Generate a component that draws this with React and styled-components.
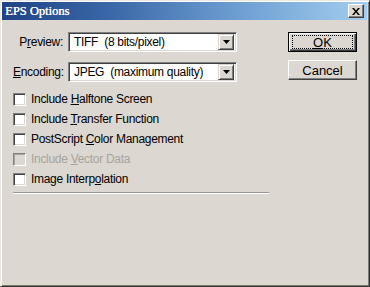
import React from "react"
import styled, { createGlobalStyle } from "styled-components"

const Global = createGlobalStyle`
  html, body {
    margin: 0;
    padding: 0;
    background: #dcd7d0;
  }
`

const FACE = "#dcd7d0"

const Window = styled.div`
  width: 370px;
  height: 287px;
  box-sizing: border-box;
  background: ${FACE};
  border-top: 1px solid #ece9e4;
  border-left: 1px solid #ece9e4;
  border-right: 1px solid #303030;
  border-bottom: 1px solid #303030;
  box-shadow: inset 1px 1px #ffffff, inset -1px -1px #7e7b76;
  padding: 1px 2px 2px 1px;
  display: flex;
  flex-direction: column;
  font-family: "Liberation Sans", Arial, sans-serif;
  font-size: 12px;
  letter-spacing: -0.3px;
  color: #000;
`

const TitleBar = styled.div`
  height: 18px;
  background: linear-gradient(to right, #1f4386 0%, #3a68a8 30%, #6e9fd2 65%, #a3cdf0 100%);
  display: flex;
  align-items: center;
  justify-content: space-between;
  padding: 0 3px 0 3px;
`

const Title = styled.span`
  font-family: "Liberation Serif", "Times New Roman", serif;
  font-size: 12.5px;
  letter-spacing: 0;
  color: #fff;
  text-shadow: 0.4px 0 #fff;
`

const CloseButton = styled.div`
  width: 16px;
  height: 14px;
  box-sizing: border-box;
  background: ${FACE};
  border-top: 1px solid #fff;
  border-left: 1px solid #fff;
  border-right: 1px solid #404040;
  border-bottom: 1px solid #404040;
  box-shadow: inset -1px -1px #808080;
  display: flex;
  align-items: center;
  justify-content: center;
`

const Body = styled.div`
  display: flex;
  padding: 12px 0 0 11px;
`

const Form = styled.div`
  width: 256px;
  display: flex;
  flex-direction: column;
`

const FieldRow = styled.div`
  display: flex;
  align-items: center;
  gap: 5px;
  margin-bottom: ${p => p.$gap || 0}px;
`

const Label = styled.span`
  width: 50px;
  text-align: right;
`

const Select = styled.div`
  width: 169px;
  height: 20px;
  box-sizing: border-box;
  background: #fff;
  border-top: 1px solid #808080;
  border-left: 1px solid #808080;
  border-right: 1px solid #fff;
  border-bottom: 1px solid #fff;
  box-shadow: inset 1px 1px #404040, inset -1px -1px ${FACE};
  display: flex;
  align-items: center;
  padding: 2px 2px 2px 5px;
`

const SelectText = styled.span`
  flex: 1;
  white-space: pre;
`

const ArrowButton = styled.div`
  width: 16px;
  height: 16px;
  box-sizing: border-box;
  background: ${FACE};
  border-top: 1px solid ${FACE};
  border-left: 1px solid ${FACE};
  border-right: 1px solid #404040;
  border-bottom: 1px solid #404040;
  box-shadow: inset 1px 1px #fff, inset -1px -1px #808080;
  display: flex;
  align-items: center;
  justify-content: center;
`

const Checks = styled.div`
  margin-top: 7px;
  display: flex;
  flex-direction: column;
`

const CheckRow = styled.div`
  height: 20px;
  display: flex;
  align-items: center;
  gap: 5px;
  color: ${p => (p.$disabled ? "#a8a49e" : "#000")};
`

const Box = styled.span`
  width: 13px;
  height: 13px;
  box-sizing: border-box;
  background: ${p => (p.$disabled ? FACE : "#fff")};
  border-top: 1px solid #808080;
  border-left: 1px solid #808080;
  border-right: 1px solid #fff;
  border-bottom: 1px solid #fff;
  box-shadow: inset 1px 1px ${p => (p.$disabled ? "#a8a49e" : "#404040")}, inset -1px -1px ${FACE};
`

const Separator = styled.div`
  margin-top: 3px;
  height: 1px;
  background: #999590;
  border-bottom: 1px solid #fff;
`

const Buttons = styled.div`
  margin-left: 19px;
  display: flex;
  flex-direction: column;
  gap: 8px;
`

const Button = styled.div`
  width: 69px;
  height: 20px;
  box-sizing: border-box;
  background: ${FACE};
  border-top: 1px solid #fff;
  border-left: 1px solid #fff;
  border-right: 1px solid #404040;
  border-bottom: 1px solid #404040;
  box-shadow: inset -1px -1px #808080;
  display: flex;
  align-items: center;
  justify-content: center;
  font-size: 13px;
  letter-spacing: 0;
  ${p =>
    p.$default &&
    `
    border: 1px solid #000;
    box-shadow: inset 1px 1px #fff, inset -1px -1px #404040, inset -2px -2px #808080;
  `}
`

const Focus = styled.span`
  border: 1px dotted #000;
  width: 59px;
  height: 12px;
  display: flex;
  align-items: center;
  justify-content: center;
`

const U = styled.span`
  text-decoration: underline;
  text-underline-offset: 1px;
`

const Arrow = () => (
  <svg width="7" height="4" viewBox="0 0 7 4">
    <path d="M0 0h7L3.5 4z" fill="#000" />
  </svg>
)

const checks = [
  { pre: "Include ", u: "H", post: "alftone Screen" },
  { pre: "Include ", u: "T", post: "ransfer Function" },
  { pre: "PostScript ", u: "C", post: "olor Management" },
  { pre: "Include ", u: "V", post: "ector Data", disabled: true },
  { pre: "Image Interp", u: "o", post: "lation" }
]

export default function App() {
  return (
    <>
      <Global />
      <Window>
        <TitleBar>
          <Title>EPS Options</Title>
          <CloseButton>
            <svg width="8" height="7" viewBox="0 0 8 7">
              <path d="M0 0h2l2 2.5L6 0h2L5 3.5 8 7H6L4 4.5 2 7H0l3-3.5z" fill="#000" />
            </svg>
          </CloseButton>
        </TitleBar>
        <Body>
          <Form>
            <FieldRow $gap={10}>
              <Label>
                P<U>r</U>eview:
              </Label>
              <Select>
                <SelectText>TIFF  (8 bits/pixel)</SelectText>
                <ArrowButton>
                  <Arrow />
                </ArrowButton>
              </Select>
            </FieldRow>
            <FieldRow>
              <Label>
                <U>E</U>ncoding:
              </Label>
              <Select>
                <SelectText>JPEG  (maximum quality)</SelectText>
                <ArrowButton>
                  <Arrow />
                </ArrowButton>
              </Select>
            </FieldRow>
            <Checks>
              {checks.map(c => (
                <CheckRow key={c.post} $disabled={c.disabled}>
                  <Box $disabled={c.disabled} />
                  <span>
                    {c.pre}
                    <U>{c.u}</U>
                    {c.post}
                  </span>
                </CheckRow>
              ))}
            </Checks>
            <Separator />
          </Form>
          <Buttons>
            <Button $default>
              <Focus>
                <U>O</U>K
              </Focus>
            </Button>
            <Button>Cancel</Button>
          </Buttons>
        </Body>
      </Window>
    </>
  )
}
